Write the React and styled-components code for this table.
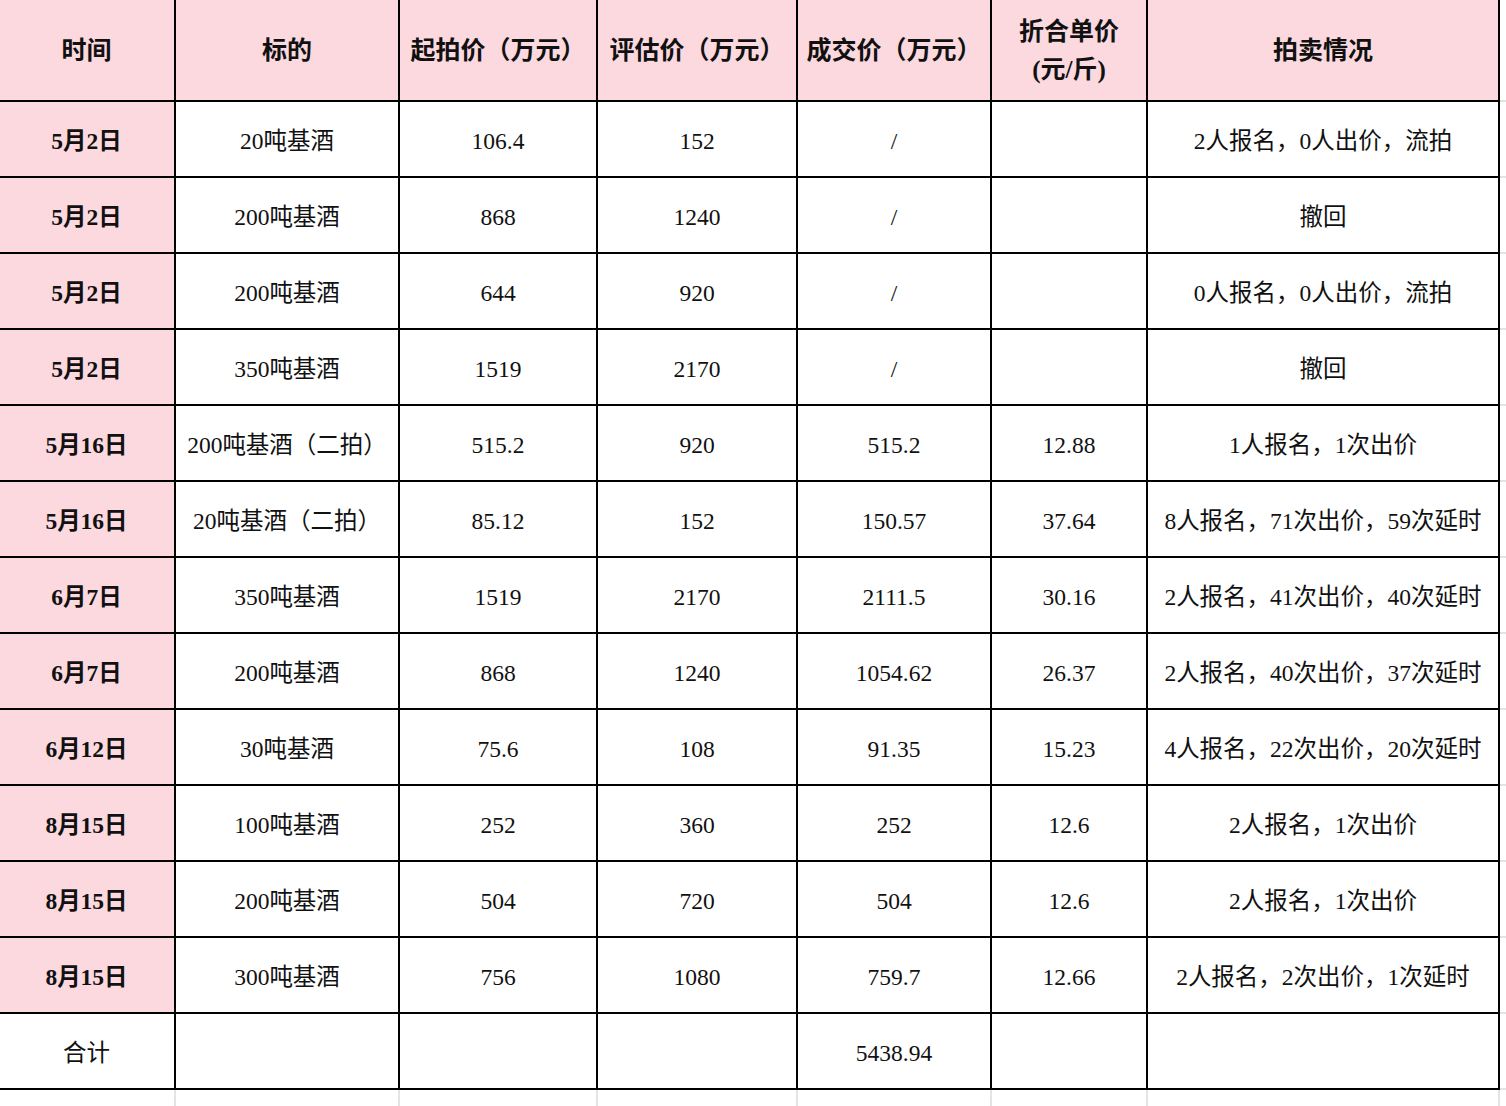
import React from "react";
import styled, { createGlobalStyle } from "styled-components";

const GlobalStyle = createGlobalStyle`
  html, body {
    margin: 0;
    padding: 0;
    background: #ffffff;
  }
  body {
    font-family: "Liberation Serif", "Noto Sans CJK SC", serif;
    color: #111111;
  }
`;

const PINK = "#fbd9df";
const LINE = "2px solid #000000";
const GRID = "2px solid #e4e4e4";

const widths = [176, 224, 198, 200, 194, 156, 352, 20];
const tableWidth = widths.reduce((a, b) => a + b, 0);

const Sheet = styled.div`
  width: 1506px;
  height: 1106px;
  overflow: hidden;
`;

const Table = styled.table`
  border-collapse: collapse;
  table-layout: fixed;
  width: ${tableWidth}px;
  min-width: ${tableWidth}px;
  margin-left: -1px;
  margin-top: -1px;
`;

const Row = styled.tr`
  height: ${(p) => p.$h}px;
`;

const Cell = styled.td`
  box-sizing: border-box;
  padding: 4px 0 0;
  text-align: center;
  vertical-align: middle;
  font-size: 23.5px;
  line-height: 38px;
  white-space: nowrap;
  overflow: hidden;
  background: ${(p) => (p.$pink ? PINK : "#ffffff")};
  font-weight: ${(p) => (p.$bold ? 700 : 400)};
  border-right: ${LINE};
  border-bottom: ${LINE};
`;

const HeadCell = styled(Cell)`
  padding-top: 2px;
  font-size: 25px;
  font-weight: 700;
  background: ${PINK};
`;

const Filler = styled.td`
  border-bottom: ${GRID};
  border-right: none;
  padding: 0;
`;

const Tail = styled.td`
  border-right: ${(p) => (p.$last ? "none" : GRID)};
  padding: 0;
`;

const header = [
  "时间",
  "标的",
  "起拍价（万元）",
  "评估价（万元）",
  "成交价（万元）",
  ["折合单价", "(元/斤)"],
  "拍卖情况",
];

const rows = [
  ["5月2日", "20吨基酒", "106.4", "152", "/", "", "2人报名，0人出价，流拍"],
  ["5月2日", "200吨基酒", "868", "1240", "/", "", "撤回"],
  ["5月2日", "200吨基酒", "644", "920", "/", "", "0人报名，0人出价，流拍"],
  ["5月2日", "350吨基酒", "1519", "2170", "/", "", "撤回"],
  ["5月16日", "200吨基酒（二拍）", "515.2", "920", "515.2", "12.88", "1人报名，1次出价"],
  ["5月16日", "20吨基酒（二拍）", "85.12", "152", "150.57", "37.64", "8人报名，71次出价，59次延时"],
  ["6月7日", "350吨基酒", "1519", "2170", "2111.5", "30.16", "2人报名，41次出价，40次延时"],
  ["6月7日", "200吨基酒", "868", "1240", "1054.62", "26.37", "2人报名，40次出价，37次延时"],
  ["6月12日", "30吨基酒", "75.6", "108", "91.35", "15.23", "4人报名，22次出价，20次延时"],
  ["8月15日", "100吨基酒", "252", "360", "252", "12.6", "2人报名，1次出价"],
  ["8月15日", "200吨基酒", "504", "720", "504", "12.6", "2人报名，1次出价"],
  ["8月15日", "300吨基酒", "756", "1080", "759.7", "12.66", "2人报名，2次出价，1次延时"],
];

const total = ["合计", "", "", "", "5438.94", "", ""];

export default function App() {
  return (
    <Sheet>
      <GlobalStyle />
      <Table>
        <colgroup>
          {widths.map((w, i) => (
            <col key={i} style={{ width: w }} />
          ))}
        </colgroup>
        <tbody>
          <Row $h={102}>
            {header.map((h, i) => (
              <HeadCell key={i}>
                {Array.isArray(h) ? (
                  <>
                    {h[0]}
                    <br />
                    {h[1]}
                  </>
                ) : (
                  h
                )}
              </HeadCell>
            ))}
            <Filler />
          </Row>
          {rows.map((r, ri) => (
            <Row $h={76} key={ri}>
              {r.map((v, ci) => (
                <Cell key={ci} $pink={ci === 0} $bold={ci === 0}>
                  {v}
                </Cell>
              ))}
              <Filler />
            </Row>
          ))}
          <Row $h={76}>
            {total.map((v, ci) => (
              <Cell key={ci}>{v}</Cell>
            ))}
            <Filler />
          </Row>
          <Row $h={30}>
            {widths.map((_, i) => (
              <Tail key={i} $last={i === widths.length - 1} />
            ))}
          </Row>
        </tbody>
      </Table>
    </Sheet>
  );
}
